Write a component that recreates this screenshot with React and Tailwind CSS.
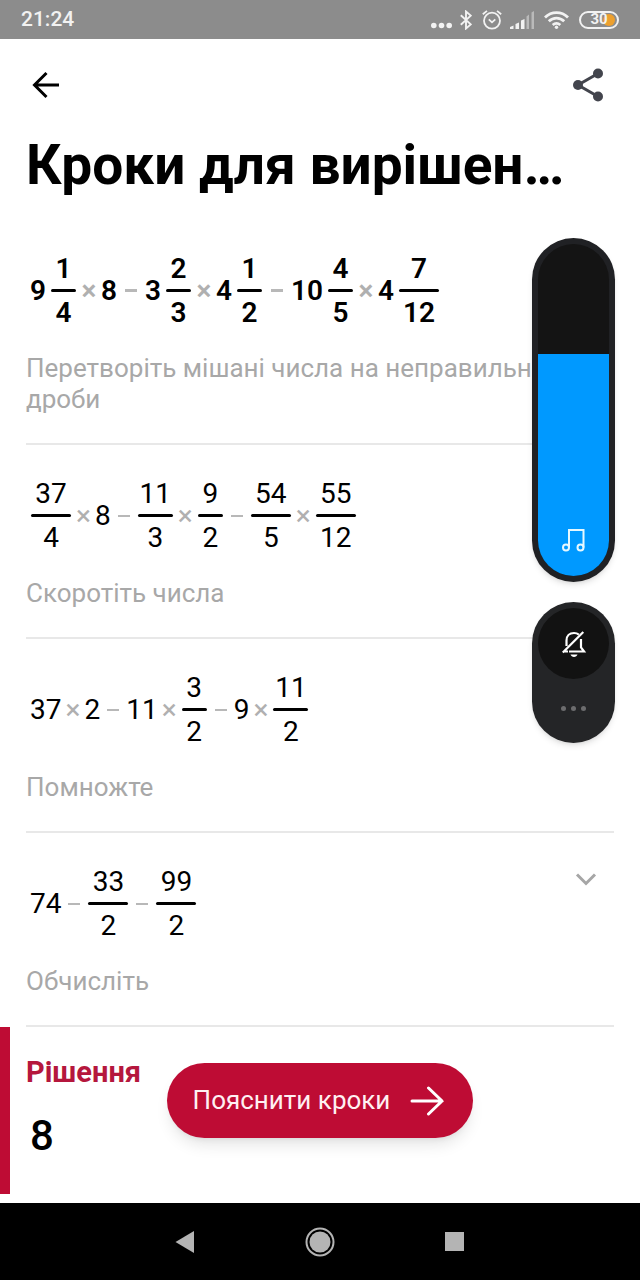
import React, { useState } from 'react';

// A number is plain text, { n, d } is a fraction, { whole, n, d } a mixed number
const STEPS = [
  {
    bold: true,
    label: 'Перетворіть мішані числа на неправильні дроби',
    terms: [
      { whole: 9, n: 1, d: 4 }, '×', 8, '−', { whole: 3, n: 2, d: 3 }, '×', { whole: 4, n: 1, d: 2 },
      '−', { whole: 10, n: 4, d: 5 }, '×', { whole: 4, n: 7, d: 12 },
    ],
  },
  {
    label: 'Скоротіть числа',
    terms: [
      { n: 37, d: 4 }, '×', 8, '−', { n: 11, d: 3 }, '×', { n: 9, d: 2 },
      '−', { n: 54, d: 5 }, '×', { n: 55, d: 12 },
    ],
  },
  {
    label: 'Помножте',
    terms: [37, '×', 2, '−', 11, '×', { n: 3, d: 2 }, '−', 9, '×', { n: 11, d: 2 }],
  },
  {
    label: 'Обчисліть',
    terms: [74, '−', { n: 33, d: 2 }, '−', { n: 99, d: 2 }],
  },
];

function barWidth(n, d) {
  if (n === 11) return 'w-[35px]';
  return n > 9 || d > 9 ? 'w-10' : 'w-[25px]';
}

function Fraction({ n, d }) {
  return (
    <span className={`mx-px flex flex-col items-center leading-[41px] ${barWidth(n, d)}`}>
      <span>{n}</span>
      <span className="h-[3px] w-full rounded-full bg-black" />
      <span>{d}</span>
    </span>
  );
}

function Term({ term, bold }) {
  if (term === '×') {
    return <span className={`text-center text-[#b0b0b0] ${bold ? 'w-6' : 'w-[23px]'}`}>×</span>;
  }
  if (term === '−') {
    return (
      <span className={`flex justify-center ${bold ? 'w-7' : 'w-[26px]'}`} role="img" aria-label="мінус">
        <span className={`w-3 bg-[#b8b8b8] ${bold ? 'h-[3px]' : 'h-0.5'}`} />
      </span>
    );
  }
  if (typeof term === 'number') return <span>{term}</span>;
  return (
    <span className="flex items-center gap-1">
      {term.whole && <span>{term.whole}</span>}
      <Fraction n={term.n} d={term.d} />
    </span>
  );
}

function Step({ step }) {
  return (
    <section className="border-b-2 border-[#e8e8e8] pt-7 pb-7">
      <div className="flex items-start justify-between">
        <div className={`flex items-center pl-1 text-[28px] text-black ${step.bold ? 'font-semibold' : ''}`}>
          {step.terms.map((term, i) => <Term key={i} term={term} bold={step.bold} />)}
        </div>
        <button aria-label="Розгорнути крок" className="px-4 py-2.5">
          <svg width="24" height="16" viewBox="0 0 24 16" fill="none" stroke="#a6a6a6" strokeWidth="3">
            <path d="M3 3.5l9 9 9-9" />
          </svg>
        </button>
      </div>
      <p className="mt-5 text-[26px] leading-[31px] text-[#a8a8a8]">{step.label}</p>
    </section>
  );
}

function StatusBar() {
  return (
    <div className="flex h-[39px] items-center justify-between bg-[#8c8c8c] px-[21px] text-[#f2f2f2]">
      <span className="text-[21px] font-medium">21:24</span>
      <div className="flex items-center">
        <svg className="mr-2" width="21" height="22" viewBox="0 0 21 22" fill="currentColor">
          <circle cx="2.8" cy="16.5" r="2.8" />
          <circle cx="10.5" cy="16.5" r="2.8" />
          <circle cx="18.2" cy="16.5" r="2.8" />
        </svg>
        <svg className="mr-2.5" width="12" height="20" viewBox="0 0 12 20" fill="none" stroke="currentColor" strokeWidth="1.9">
          <path d="M.8 5.2l10 9.2L6 18.5v-17l4.8 4.1-10 9.2" />
        </svg>
        <svg className="mr-2" width="20" height="20" viewBox="0 0 20 20" fill="none" stroke="currentColor" strokeWidth="1.8">
          <circle cx="10" cy="10.7" r="8" />
          <path d="M.8 4.2L5 .9M19.2 4.2L15 .9M6.8 9.4l3.2 3 3.3-3" />
        </svg>
        <svg className="mr-2.5" width="24" height="18" viewBox="0 0 24 18" fill="currentColor">
          <path d="M0 18v-2l3.500-1.500V18zM5.500 18v-5L9 11.500V18zM11 18V9.500L14.500 8v10z" />
          <path opacity=".45" d="M16.5 18V5.500l2.500-2V18zM21.500 18V1.500L24 0v18z" />
        </svg>
        <svg className="mr-2.5" width="25" height="18" viewBox="0 0 25 18" fill="none" stroke="currentColor" strokeWidth="2.8">
          <path d="M1 6.5c6.5-6.500 16.500-6.500 23 0M4.800 10.300c4.500-4.300 10.900-4.300 15.400 0M8.700 14c2.300-2 5.300-2 7.600 0" />
          <circle cx="12.5" cy="16.3" r="1.7" fill="currentColor" stroke="none" />
        </svg>
        <div className="relative flex h-[18px] w-10 items-center justify-center overflow-hidden rounded-full border-2 border-current">
          <span className="absolute right-0.5 h-3 w-3 rounded-full bg-[#eda02e]" />
          <span className="relative text-[15px] leading-none font-bold">30</span>
        </div>
      </div>
    </div>
  );
}

function VolumePanel() {
  const [volume, setVolume] = useState(67);

  return (
    <div className="absolute top-[238px] right-[25px] flex w-[83px] flex-col gap-5">
      <div className="rounded-full bg-[#202124] p-1.5 shadow-md">
        <div className="relative flex h-[332px] flex-col justify-end overflow-hidden rounded-full bg-[#141414]">
          <div className="bg-[#0099ff]" style={{ height: `${volume}%` }} />
          <svg className="absolute bottom-6 left-6" width="24" height="24" viewBox="0 0 24 24" fill="none" stroke="#e6f8ff" strokeWidth="2">
            <circle cx="4" cy="19.5" r="3" />
            <circle cx="18.5" cy="19.5" r="3" />
            <path d="M7 19.5V2h14.500v17.500" />
          </svg>
          <input
            type="range"
            aria-label="Гучність"
            value={volume}
            onChange={(e) => setVolume(Number(e.target.value))}
            className="absolute inset-0 h-full w-full opacity-0 [direction:rtl] [writing-mode:vertical-lr]"
          />
        </div>
      </div>
      <div className="flex flex-col items-center rounded-full bg-[#242527] p-1.5 shadow-md">
        <button aria-label="Без звуку" className="flex h-[71px] w-full items-center justify-center rounded-full bg-[#121212]">
          <svg width="26" height="28" viewBox="0 0 26 28" fill="none" stroke="#fff" strokeWidth="2.2">
            <path d="M5.5 16v-5.500C5.500 6 8.500 3 13 3c1.900 0 3.600.6 4.900 1.600M20 9v8.500l3 4H8" />
            <path d="M1.8 22.500L22.300 2M7 21.500H3.500" />
            <path d="M9.5 24.500h7c-.6 1.500-1.800 2.500-3.500 2.500s-2.900-1-3.500-2.500z" fill="#fff" stroke="none" />
          </svg>
        </button>
        <button aria-label="Ще" className="flex h-[58px] w-full items-center justify-center gap-[5px]">
          <span className="h-[5px] w-[5px] rounded-full bg-[#6c6c6e]" />
          <span className="h-[5px] w-[5px] rounded-full bg-[#6c6c6e]" />
          <span className="h-[5px] w-[5px] rounded-full bg-[#6c6c6e]" />
        </button>
      </div>
    </div>
  );
}

function NavBar() {
  return (
    <nav className="flex h-[77px] items-center justify-center gap-[110px] bg-black pr-0.5">
      <button aria-label="Назад">
        <svg width="20" height="22" viewBox="0 0 20 22" fill="#b4b4b4"><path d="M.5 11L19 0v22z" /></svg>
      </button>
      <button aria-label="Головний екран">
        <svg width="30" height="30" viewBox="0 0 30 30" fill="#b4b4b4">
          <circle cx="15" cy="15" r="10.5" />
          <circle cx="15" cy="15" r="13.5" fill="none" stroke="#b4b4b4" strokeWidth="2" />
        </svg>
      </button>
      <button aria-label="Останні програми" className="h-[19px] w-[19px] bg-[#b4b4b4]" />
    </nav>
  );
}

export default function App() {
  return (
    <div className="relative flex min-h-screen flex-col bg-white font-[Roboto,sans-serif] text-black">
      <StatusBar />

      <header className="flex h-[91px] items-center justify-between px-8">
        <button aria-label="Назад">
          <svg width="28" height="28" viewBox="0 0 28 28" fill="none" stroke="#000" strokeWidth="3">
            <path d="M27 14H3M14.5 2L2.500 14l12 12" />
          </svg>
        </button>
        <button aria-label="Поділитися" className="mr-1">
          <svg width="32" height="34" viewBox="0 0 32 34" fill="#43454d">
            <path d="M26 5.5L6 17l20 11.500" fill="none" stroke="#43454d" strokeWidth="3" />
            <circle cx="26" cy="5.5" r="5" />
            <circle cx="6" cy="17" r="5" />
            <circle cx="26" cy="28.5" r="5" />
          </svg>
        </button>
      </header>

      <main className="relative flex-1 pb-2">
        <div className="px-[26px]">
          <h1 className="mb-5 truncate text-[55px] leading-[70px] font-bold">Кроки для вирішен…</h1>
          {STEPS.map((step) => <Step key={step.label} step={step} />)}
        </div>

        {/* Final answer */}
        <section className="border-l-[10px] border-[#be0c34] px-4 pt-[30px] pb-[30px]">
          <h2 className="text-[29px] leading-[31px] font-bold text-[#b5173d]">Рішення</h2>
          <p className="mt-5 pl-1 text-[42px] leading-[56px] font-medium">8</p>
        </section>

        <div className="pointer-events-none absolute inset-x-0 bottom-[65px] flex justify-center">
          <button className="pointer-events-auto flex h-[75px] items-center gap-5 rounded-full bg-[#be0c34] pr-7 pl-[26px] text-[26px] text-[#fff0f2] shadow-lg">
            Пояснити кроки
            <svg width="35" height="30" viewBox="0 0 35 30" fill="none" stroke="#fff" strokeWidth="3" strokeLinecap="round">
              <path d="M2 15h30M18.5 2L32 15 18.500 28" />
            </svg>
          </button>
        </div>
      </main>

      <NavBar />
      <VolumePanel />
    </div>
  );
}
